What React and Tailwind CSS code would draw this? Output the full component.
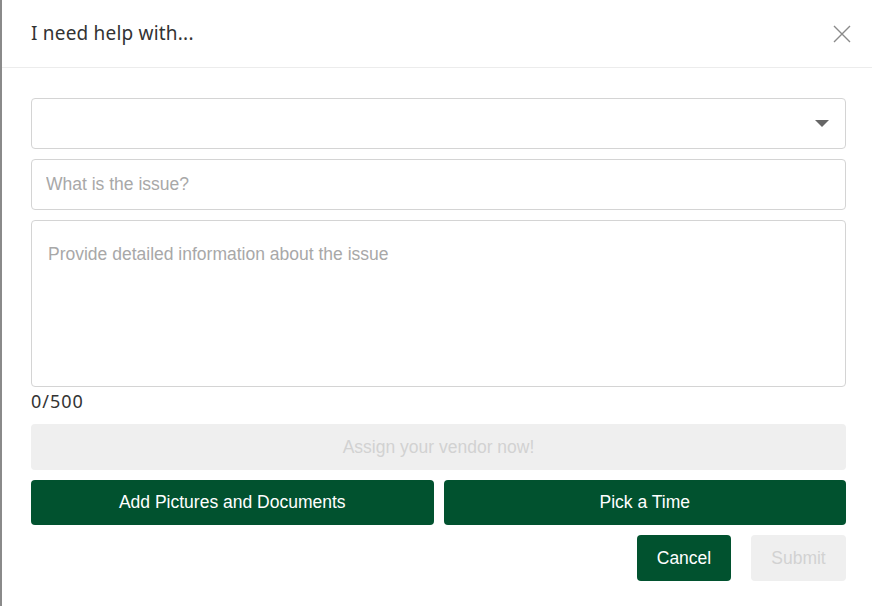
import React from "react";

const sans = { fontFamily: '"Liberation Sans", Arial, sans-serif' };
const heading = { fontFamily: '"Noto Sans", "Open Sans", sans-serif' };

export default function App() {
  return (
    <div className="w-[872px] h-[606px] bg-white border-l-2 border-[#8a8a8a] overflow-hidden">
      <div
        className="h-[68px] flex items-center justify-between pl-[29px] pr-[20px] border-b border-[#ececec]"
        style={heading}
      >
        <h2 className="text-[19px] text-[#333] font-normal tracking-[0.2px]">I need help with...</h2>
        <button className="w-5 h-5 flex items-center justify-center text-[#8a8a8a]">
          <svg width="18" height="18" viewBox="0 0 18 18" fill="none" stroke="currentColor" strokeWidth="1.4">
            <path d="M1 1L17 17M17 1L1 17" />
          </svg>
        </button>
      </div>

      <div className="pl-[29px] pr-[26px] pt-[30px] flex flex-col" style={sans}>
        <div className="h-[51px] rounded border border-[#d4d4d4] flex items-center justify-end pr-[16px]">
          <svg width="14" height="7" viewBox="0 0 14 7">
            <path d="M0 0H14L7 7Z" fill="#666" />
          </svg>
        </div>

        <input
          className="mt-[10px] h-[51px] rounded border border-[#d4d4d4] px-[14px] text-[17.5px] text-[#333] placeholder-[#a8a8a8] outline-none"
          placeholder="What is the issue?"
        />

        <textarea
          className="mt-[10px] h-[167px] rounded border border-[#d4d4d4] px-[16px] pt-[20px] text-[17.5px] text-[#333] placeholder-[#a8a8a8] outline-none resize-none"
          placeholder="Provide detailed information about the issue"
        />

        <div className="text-[18px] text-[#333] leading-[26px] mt-[1px] tracking-[1px]" style={heading}>
          0/500
        </div>

        <button className="mt-[10px] h-[46px] rounded bg-[#efefef] text-[#d2d2d2] text-[17.5px]">
          Assign your vendor now!
        </button>

        <div className="mt-[10px] grid grid-cols-2 gap-[10px]">
          <button className="h-[45px] rounded bg-[#01522f] text-white text-[17.5px]">
            Add Pictures and Documents
          </button>
          <button className="h-[45px] rounded bg-[#01522f] text-white text-[17.5px]">
            Pick a Time
          </button>
        </div>

        <div className="mt-[10px] flex justify-end gap-[20px]">
          <button className="w-[94px] h-[46px] rounded bg-[#01522f] text-white text-[17.5px]">
            Cancel
          </button>
          <button className="w-[95px] h-[46px] rounded bg-[#efefef] text-[#d2d2d2] text-[17.5px]">
            Submit
          </button>
        </div>
      </div>
    </div>
  );
}
